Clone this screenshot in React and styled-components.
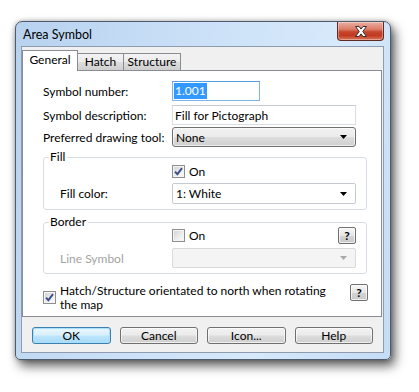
import React from 'react';
import styled, { createGlobalStyle, css } from 'styled-components';

const Global = createGlobalStyle`
  html, body { margin: 0; padding: 0; background: #ffffff; }
  body {
    font-family: "Segoe UI", Lato, "Liberation Sans", sans-serif;
    font-size: 12px;
    color: #000;
  }
  * { box-sizing: border-box; }
`;

const Desktop = styled.div`
  width: 419px;
  height: 392px;
  padding: 21px 0 0 15px;
  overflow: hidden;
`;

const Window = styled.div`
  width: 376px;
  height: 339px;
  border: 1px solid #505b6b;
  border-radius: 7px 7px 5px 5px;
  background: linear-gradient(105deg, #b7d2ef 0%, #cde2f8 45%, #d7e9fb 70%, #c4dcf5 100%);
  box-shadow: 4px 6px 11px rgba(0, 0, 0, 0.62), 0 0 5px rgba(0, 0, 0, 0.28);
  display: flex;
  flex-direction: column;
  padding: 0 6px 6px 5px;
`;

const TitleBar = styled.div`
  height: 24px;
  display: flex;
  justify-content: space-between;
  align-items: center;
`;

const Title = styled.span`
  padding-left: 2px;
  font-size: 12.5px;
  color: #000;
`;

const CloseButton = styled.div`
  align-self: flex-start;
  width: 47px;
  height: 19px;
  border: 1px solid #5e2a22;
  border-top: none;
  border-radius: 0 0 4px 4px;
  background: linear-gradient(180deg, #eab0a2 0%, #dc7d68 40%, #c5452c 55%, #c23a21 75%, #d9775b 100%);
  box-shadow: inset 0 0 0 1px rgba(255, 255, 255, 0.35);
  display: flex;
  align-items: center;
  justify-content: center;
`;

const Client = styled.div`
  flex: 1;
  background: #f0f0f0;
  border: 1px solid #8d9cae;
  padding: 3px 1px 0 0;
  display: flex;
  flex-direction: column;
`;

const TabStrip = styled.div`
  height: 20px;
  display: flex;
  align-items: flex-end;
  position: relative;
  z-index: 2;
`;

const Tab = styled.div`
  width: ${(p) => p.$w}px;
  height: 17px;
  margin-left: ${(p) => (p.$first ? 0 : -1)}px;
  border: 1px solid #898c95;
  border-bottom: none;
  background: linear-gradient(180deg, #f3f3f3 0%, #ebebeb 50%, #dddddd 51%, #cfcfcf 100%);
  display: flex;
  align-items: center;
  justify-content: center;
  padding-bottom: 1px;
  ${(p) =>
    p.$active &&
    css`
      height: 21px;
      margin-bottom: -1px;
      background: #ffffff;
      padding-bottom: 3px;
      position: relative;
      z-index: 3;
    `}
`;

const Panel = styled.div`
  height: 247px;
  border: 1px solid #898c95;
  background: #ffffff;
  padding: 10px 0 0 20px;
  display: flex;
  flex-direction: column;
`;

const FormRow = styled.div`
  display: grid;
  grid-template-columns: ${(p) => p.$label || 129}px 184px;
  align-items: center;
  margin-top: ${(p) => p.$mt || 0}px;
`;

const Label = styled.span`
  color: ${(p) => (p.$disabled ? '#a3a3a3' : '#000')};
  white-space: nowrap;
`;

const TextBox = styled.div`
  height: 20px;
  width: ${(p) => p.$w || 184}px;
  border: 1px solid ${(p) => (p.$focused ? '#7db5ea' : '#d9dee5')};
  border-top-color: ${(p) => (p.$focused ? '#569de5' : '#c5cad2')};
  background: #fff;
  display: flex;
  align-items: center;
  padding-left: 1px;
  white-space: nowrap;
`;

const Selected = styled.span`
  background: #3399ff;
  color: #fff;
  line-height: 16px;
  padding: 0 1px;
`;

const PlainText = styled.span`
  padding-left: 1px;
`;

const ComboButton = styled.div`
  height: 20px;
  border: 1px solid #707070;
  border-radius: 3px;
  background: linear-gradient(180deg, #f2f2f2 0%, #ebebeb 48%, #dddddd 52%, #cfcfcf 100%);
  box-shadow: inset 0 0 0 1px rgba(255, 255, 255, 0.6);
  display: flex;
  align-items: center;
  justify-content: space-between;
  padding: 0 8px 0 3px;
`;

const ComboBox = styled.div`
  height: ${(p) => p.$h || 21}px;
  border: 1px solid ${(p) => (p.$disabled ? '#d9d9d9' : '#c5cad2')};
  border-radius: 2px;
  background: ${(p) => (p.$disabled ? '#f4f4f4' : '#ffffff')};
  display: flex;
  align-items: center;
  justify-content: space-between;
  padding: 0 8px 0 3px;
`;

const Group = styled.div`
  position: relative;
  width: 324px;
  margin-top: ${(p) => p.$mt}px;
  border: 1px solid #d5dfe5;
  border-radius: 3px;
  padding: ${(p) => p.$pt}px 10px 5px 16px;
  display: flex;
  flex-direction: column;
  gap: ${(p) => p.$gap}px;
`;

const Caption = styled.span`
  position: absolute;
  left: 5px;
  top: -9px;
  background: #ffffff;
  padding: 0 2px 0 1px;
  line-height: 16px;
`;

const CheckLine = styled.div`
  display: flex;
  align-items: center;
  gap: 4px;
`;

const CheckRow = styled.div`
  height: 17px;
  display: grid;
  grid-template-columns: 112px 1fr auto;
  align-items: center;
`;

const Box = styled.span`
  width: 13px;
  height: 13px;
  flex: none;
  border: 1px solid #8e8f8f;
  background: linear-gradient(135deg, #cfd0d2 0%, #eeeeee 60%, #fdfdfd 100%);
  box-shadow: inset 0 0 0 1px #f4f4f4;
  display: flex;
  align-items: center;
  justify-content: center;
`;

const HelpButton = styled.div`
  width: 18px;
  height: 17px;
  border: 1px solid #707070;
  border-radius: 2px;
  background: linear-gradient(180deg, #f6f6f6 0%, #e6e6e6 50%, #d4d4d4 51%, #cacaca 100%);
  box-shadow: inset 0 0 0 1px rgba(255, 255, 255, 0.7);
  display: flex;
  align-items: center;
  justify-content: center;
  font-weight: bold;
  font-size: 12px;
  line-height: 1;
`;

const NorthRow = styled.div`
  margin-top: 9px;
  width: 325px;
  display: flex;
  align-items: center;
`;

const NorthText = styled.span`
  flex: 1;
  line-height: 14px;
  padding-left: 4px;
  padding-top: 1px;
  align-self: flex-start;
`;

const NorthHelp = styled.div`
  align-self: flex-start;
  margin-top: 1px;
`;

const ButtonRow = styled.div`
  display: flex;
  gap: 9px;
  padding: 0 9px 0 10px;
  margin-top: 10px;
`;

const Button = styled.div`
  flex: 1;
  height: 17px;
  border: 1px solid #707070;
  border-radius: 3px;
  background: linear-gradient(180deg, #f2f2f2 0%, #ebebeb 48%, #dddddd 52%, #cfcfcf 100%);
  box-shadow: inset 0 0 0 1px rgba(255, 255, 255, 0.65);
  display: flex;
  align-items: center;
  justify-content: center;
  ${(p) =>
    p.$default &&
    css`
      border-color: #3c7fb1;
      background: linear-gradient(180deg, #eaf6fd 0%, #d9f0fc 48%, #bee6fd 52%, #a7d9f5 100%);
      box-shadow: inset 0 0 0 1px #a7e1ff;
    `}
`;

const Arrow = ({ color = '#000' }) => (
  <svg width="7" height="4" viewBox="0 0 7 4">
    <path d="M0 0h7L3.5 4z" fill={color} />
  </svg>
);

const Check = ({ checked }) => (
  <Box>
    {checked && (
      <svg width="9" height="9" viewBox="0 0 9 9">
        <path d="M1 4.6 L3.4 7.2 L8 1.2" fill="none" stroke="#3b4e8c" strokeWidth="1.9" />
      </svg>
    )}
  </Box>
);

const CloseGlyph = () => (
  <svg width="14" height="11" viewBox="0 0 14 11">
    <path
      d="M1.5 0.5h3.5l2 2.6 2-2.6h3.5l-3.7 5 3.7 5h-3.5l-2-2.6-2 2.6h-3.5l3.7-5z"
      fill="#ffffff"
      stroke="#3b2b2b"
      strokeWidth="1"
      strokeLinejoin="round"
    />
  </svg>
);

export default function App() {
  return (
    <>
      <Global />
      <Desktop>
        <Window>
          <TitleBar>
            <Title>Area Symbol</Title>
            <CloseButton>
              <CloseGlyph />
            </CloseButton>
          </TitleBar>
          <Client>
            <TabStrip>
              <Tab $w={56} $first $active>General</Tab>
              <Tab $w={47}>Hatch</Tab>
              <Tab $w={58}>Structure</Tab>
            </TabStrip>
            <Panel>
              <FormRow>
                <Label>Symbol number:</Label>
                <TextBox $w={88} $focused>
                  <Selected>1.001</Selected>
                </TextBox>
              </FormRow>
              <FormRow $mt={4}>
                <Label>Symbol description:</Label>
                <TextBox>
                  <PlainText>Fill for Pictograph</PlainText>
                </TextBox>
              </FormRow>
              <FormRow $mt={2}>
                <Label>Preferred drawing tool:</Label>
                <ComboButton>
                  <span>None</span>
                  <Arrow />
                </ComboButton>
              </FormRow>

              <Group $mt={10} $pt={5} $gap={3}>
                <Caption>Fill</Caption>
                <CheckRow>
                  <span />
                  <CheckLine>
                    <Check checked />
                    <span>On</span>
                  </CheckLine>
                </CheckRow>
                <FormRow $label={112}>
                  <Label>Fill color:</Label>
                  <ComboBox>
                    <span>1: White</span>
                    <Arrow />
                  </ComboBox>
                </FormRow>
              </Group>

              <Group $mt={12} $pt={4} $gap={4}>
                <Caption>Border</Caption>
                <CheckRow>
                  <span />
                  <CheckLine>
                    <Check />
                    <span>On</span>
                  </CheckLine>
                  <HelpButton>?</HelpButton>
                </CheckRow>
                <FormRow $label={112}>
                  <Label $disabled>Line Symbol</Label>
                  <ComboBox $disabled $h={20}>
                    <span />
                    <Arrow color="#a8a8a8" />
                  </ComboBox>
                </FormRow>
              </Group>

              <NorthRow>
                <Check checked />
                <NorthText>
                  Hatch/Structure orientated to north when rotating
                  <br />
                  the map
                </NorthText>
                <NorthHelp>
                  <HelpButton>?</HelpButton>
                </NorthHelp>
              </NorthRow>
            </Panel>
            <ButtonRow>
              <Button $default>OK</Button>
              <Button>Cancel</Button>
              <Button>Icon...</Button>
              <Button>Help</Button>
            </ButtonRow>
          </Client>
        </Window>
      </Desktop>
    </>
  );
}
